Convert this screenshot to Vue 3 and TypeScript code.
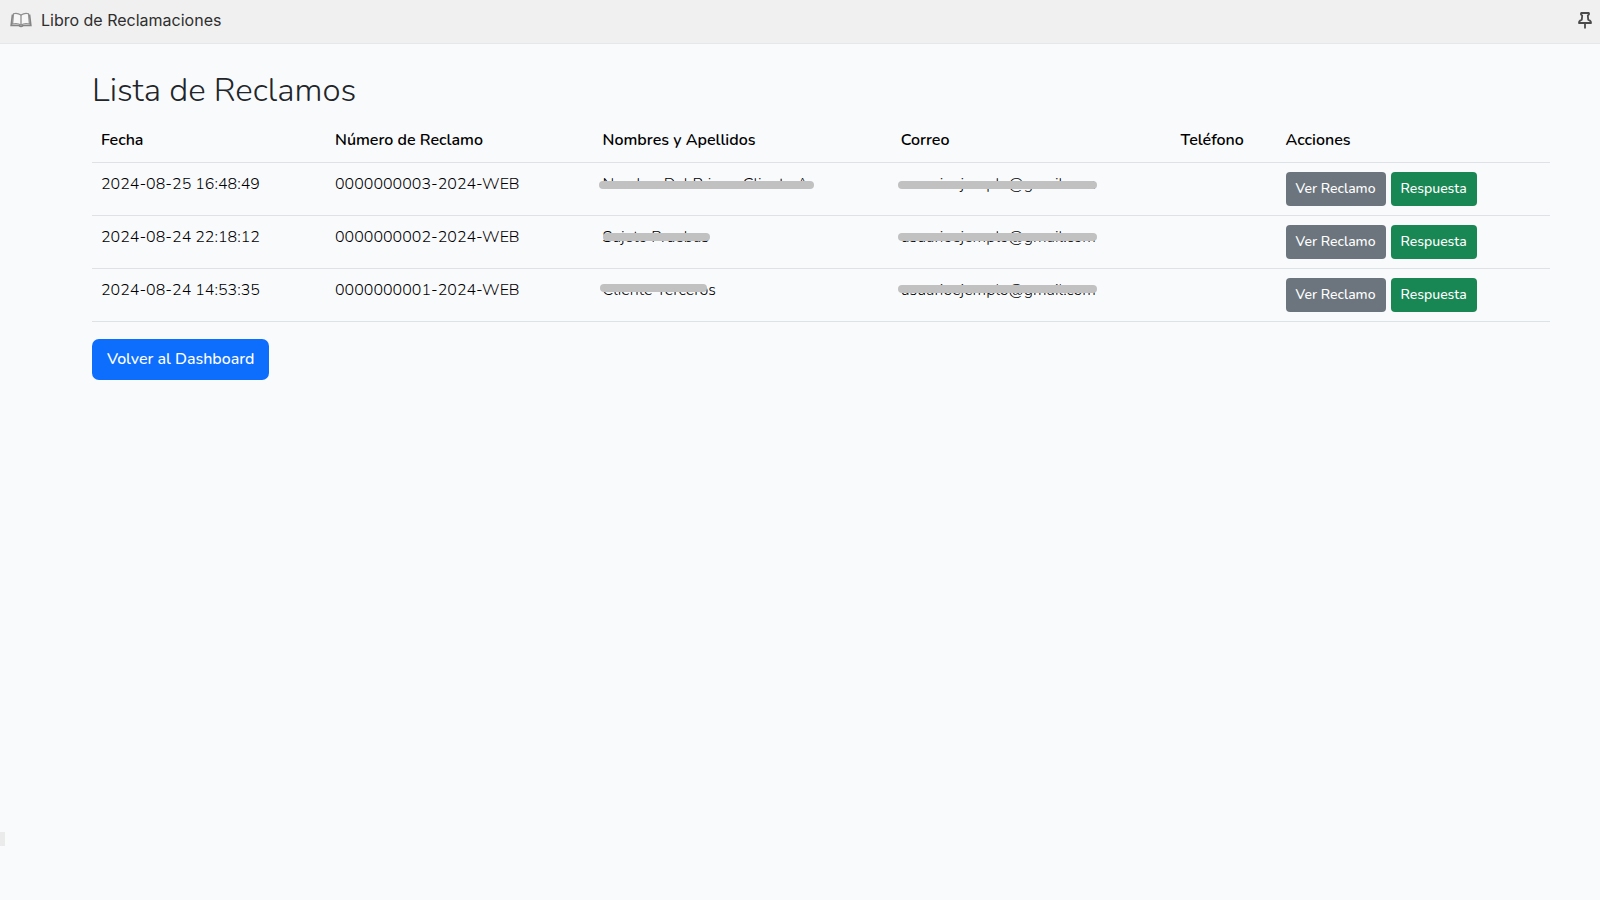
<script setup lang="ts">
interface Masked {
  text: string
  start: number
  width: number
  top: number
}

interface Claim {
  date: string
  code: string
  name: Masked
  email: Masked
}

const columns: string[] = ['Fecha', 'Número de Reclamo', 'Nombres y Apellidos', 'Correo', 'Teléfono', 'Acciones']

const claims: Claim[] = [
  {
    date: '2024-08-25 16:48:49',
    code: '0000000003-2024-WEB',
    name: { text: 'Nombre Del Primer Cliente A', start: -4, width: 215, top: 9 },
    email: { text: 'usuarioejemplo@gmail.com', start: -3, width: 199, top: 9 },
  },
  {
    date: '2024-08-24 22:18:12',
    code: '0000000002-2024-WEB',
    name: { text: 'Sujeto Pruebas', start: 0, width: 107, top: 8 },
    email: { text: 'usuarioejemplo@gmail.com', start: -3, width: 199, top: 8 },
  },
  {
    date: '2024-08-24 14:53:35',
    code: '0000000001-2024-WEB',
    name: { text: 'Cliente Terceros', start: -3, width: 107, top: 6 },
    email: { text: 'usuarioejemplo@gmail.com', start: -3, width: 199, top: 7 },
  },
]

const barStyle = (m: Masked) => ({ left: `${m.start}px`, width: `${m.width}px`, top: `${m.top}px` })
</script>

<template>
  <div class="page">
    <header class="topbar">
      <svg class="book" viewBox="0 0 22 16" fill="none" aria-hidden="true">
        <path d="M2.500 2.500 1.200 13.500H9q2 1.600 4 0h7.800L19.500 2.500" stroke="#858585" stroke-width="1.700" />
        <path d="M11 3Q7 .5 3.500 1.800L2.600 12q5-1.200 8.400 1 3.400-2.200 8.400-1L18.500 1.800Q15 .5 11 3Z" fill="#f7f7f7" stroke="#8f8f8f" stroke-width="1.200" />
        <path d="M11 3v10" stroke="#8f8f8f" stroke-width="1.300" />
      </svg>
      <span class="brand">Libro de Reclamaciones</span>
      <button class="pin" type="button" aria-label="Fijar">
        <svg viewBox="0 0 14 18" fill="none" stroke="#4a4a4a" stroke-width="1.800" stroke-linejoin="round" stroke-linecap="round" aria-hidden="true">
          <path d="M3.200 2h7.600q.8 1.600-1 2.500l.4 4.200q2.800 1.100 2.800 3.300H1q0-2.200 2.800-3.300l.4-4.200q-1.800-.9-1-2.500ZM7 12v4.800" />
        </svg>
      </button>
    </header>

    <main class="content">
      <h1>Lista de Reclamos</h1>
      <table>
        <colgroup>
          <col v-for="(c, i) in columns" :key="c" :class="`col-${i}`" />
        </colgroup>
        <thead>
          <tr>
            <th v-for="c in columns" :key="c" scope="col">{{ c }}</th>
          </tr>
        </thead>
        <tbody>
          <tr v-for="r in claims" :key="r.code">
            <td>{{ r.date }}</td>
            <td>{{ r.code }}</td>
            <td>
              <span class="masked">{{ r.name.text }}<i class="bar" :style="barStyle(r.name)"></i></span>
            </td>
            <td>
              <span class="masked">{{ r.email.text }}<i class="bar" :style="barStyle(r.email)"></i></span>
            </td>
            <td></td>
            <td>
              <div class="actions">
                <button class="btn small grey" type="button">Ver Reclamo</button>
                <button class="btn small green" type="button">Respuesta</button>
              </div>
            </td>
          </tr>
        </tbody>
      </table>
      <a class="btn blue" href="#">Volver al Dashboard</a>
    </main>
    <div class="handle"></div>
  </div>
</template>

<style>
body {
  margin: 0;
  background: #f9fafc;
}
</style>

<style scoped>
.page {
  min-height: 100vh;
  color: #000;
  font-family: "Nunito", "Open Sans", "Noto Sans", sans-serif;
  font-size: 16px;
  line-height: 25px;
}
.topbar {
  display: flex;
  align-items: center;
  height: 43px;
  box-sizing: border-box;
  padding: 0 8px 4px 10px;
  background: #f0f0f0;
  box-shadow: 0 1px 0 #e4e8ea;
}
.book {
  width: 22px;
  height: 16px;
}
.brand {
  margin-left: 9px;
  color: #2e2e2e;
  font-family: Inter, sans-serif;
  font-size: 16px;
  line-height: 24px;
}
.pin {
  display: flex;
  margin-left: auto;
  padding: 0;
  border: 0;
  background: none;
}
.pin svg {
  width: 14px;
  height: 18px;
}
.content {
  padding: 27px 50px 0 92px;
}
h1 {
  margin: 0 0 8px;
  color: #212529;
  font-size: 33px;
  font-weight: 350;
  line-height: 42px;
}
table {
  width: 100%;
  margin-bottom: 17px;
  border-collapse: separate;
  border-spacing: 0;
  table-layout: fixed;
}
.col-0 { width: 16.05%; }
.col-1 { width: 18.35%; }
.col-2 { width: 20.45%; }
.col-3 { width: 19.2%; }
.col-4 { width: 7.2%; }
.col-5 { width: 18.75%; }
th,
td {
  padding: 9px;
  border-bottom: 1px solid #dee2e6;
  text-align: left;
  vertical-align: top;
  white-space: nowrap;
}
th {
  padding-top: 8px;
  font-weight: 600;
}
td {
  font-weight: 350;
}
.masked {
  position: relative;
  display: inline-block;
}
.bar {
  position: absolute;
  height: 8px;
  border-radius: 4px;
  background: #c1c1c1;
}
.actions {
  display: flex;
  gap: 5px;
}
.btn {
  display: inline-block;
  box-sizing: border-box;
  border: 0;
  border-radius: 7px;
  padding: 8px 15px;
  color: #fff;
  font-family: inherit;
  font-size: 16px;
  font-weight: 500;
  line-height: 25px;
  text-decoration: none;
}
.small {
  border-radius: 4px;
  padding: 6px 10px 7px;
  font-size: 14px;
  line-height: 21px;
}
.grey { background: #6c757d; }
.green { background: #198754; }
.blue { background: #0d6efd; }
.handle {
  position: fixed;
  left: 0;
  bottom: 54px;
  width: 5px;
  height: 14px;
  background: #ebebeb;
}
</style>
